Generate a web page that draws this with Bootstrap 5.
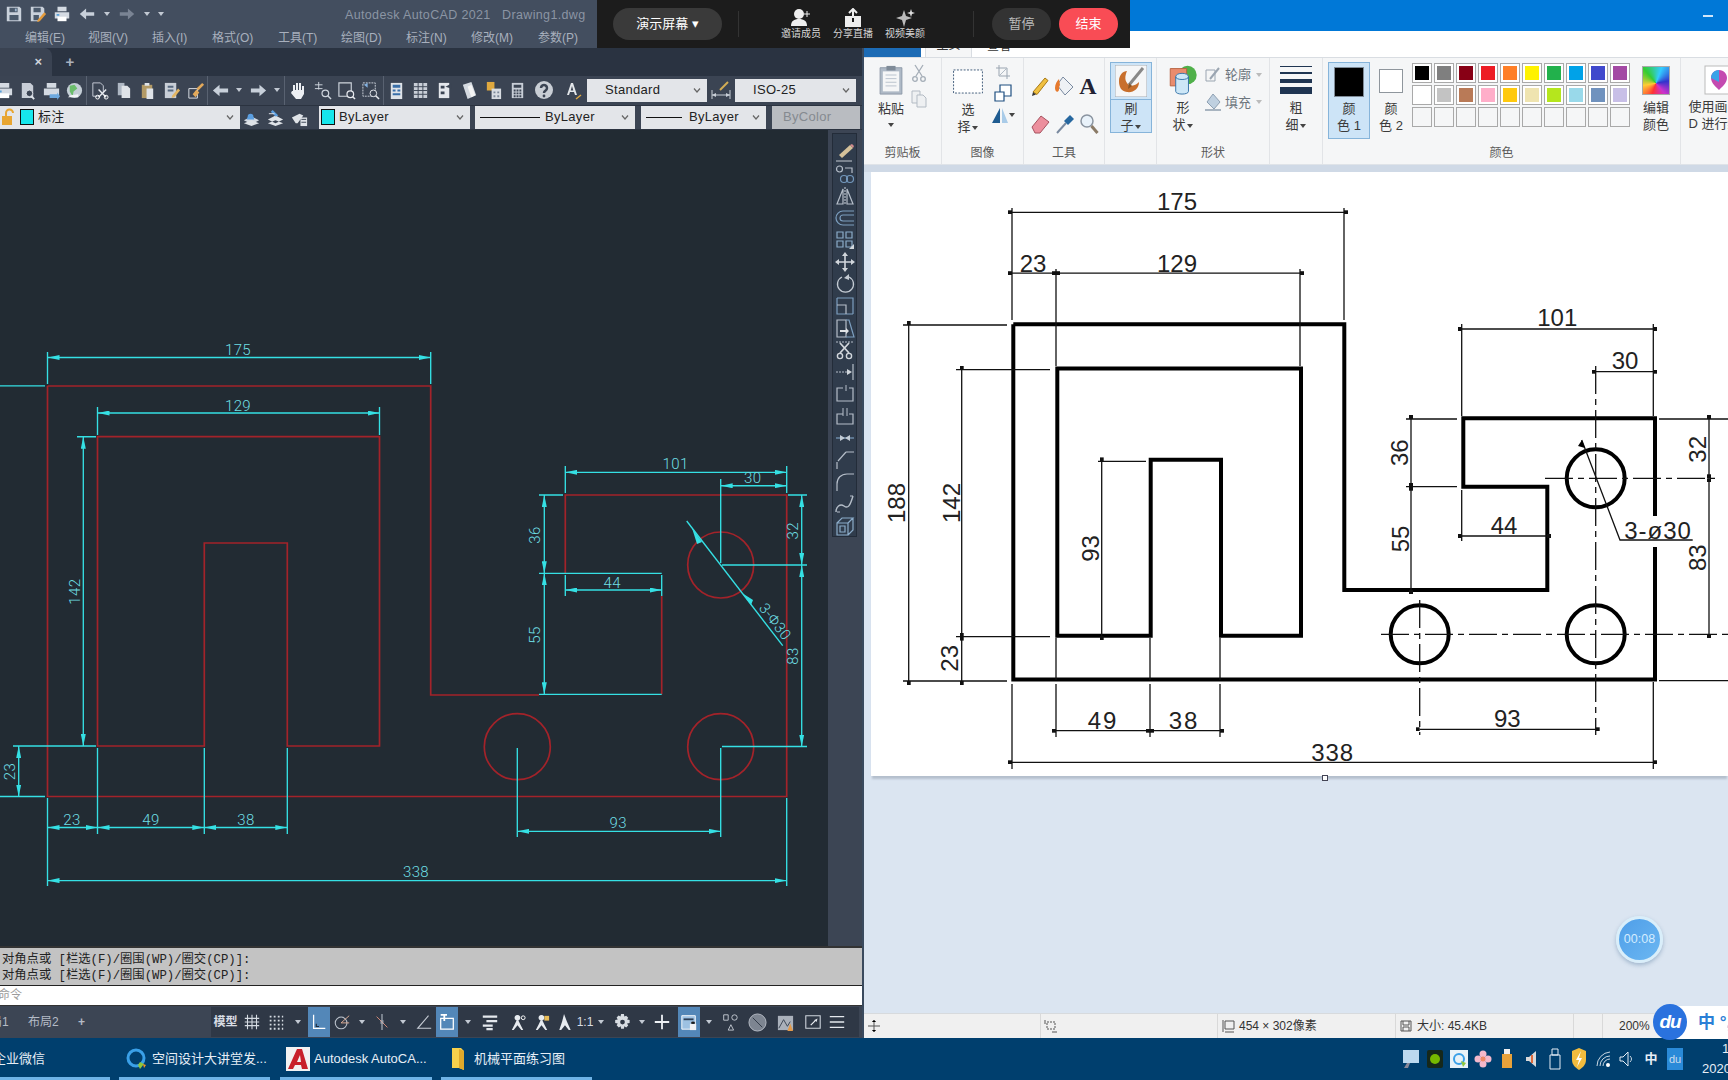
<!doctype html>
<html lang="zh">
<head>
<meta charset="utf-8">
<title>AutoCAD 与 画图</title>
<link href="https://cdn.jsdelivr.net/npm/bootstrap@5.3.0/dist/css/bootstrap.min.css" rel="stylesheet">
<style>
html,body{height:1080px;overflow:hidden;background:#1d2938}
body{font-family:"Liberation Sans","Noto Sans CJK SC",sans-serif;font-size:12px;color:#333;position:relative}
.defs-svg{position:absolute;width:0;height:0}
.desk{height:1038px}
.cad{width:862px;background:#3c4554;color:#aab2bf}
.ptw{width:866px;background:#dbe5f1;border-left:2px solid #3a4a5e}
.cad-title{height:48px;background:#434e5f}
.qat{height:28px;padding-left:5px;gap:6px}
.cad-name{color:#8b95a4;font-size:12.5px;letter-spacing:.35px;left:345px;top:6px}
.cad-menu{padding-left:25px;height:20px;font-size:12px;color:#a8b0bd}
.m1{width:63px}.m2{width:64px}.m3{width:60px}.m4{width:66px}.m5{width:63px}.m6{width:65px}.m7{width:67px}
.cad-tabs{height:28px;background:#2a3341}
.cad-tab{width:52px;background:#3a4352;border-top-right-radius:8px;color:#d0d5dc;font-size:13px;font-weight:700;padding-right:10px}
.tab-plus{width:36px;color:#a9b1bd;font-size:15px;font-weight:700}
.tb1{height:30px;background:#3b4453;border-bottom:1px solid #2b3340}
.tb2{height:24px;background:#3b4453;border-bottom:1px solid #2b3340}
.grp{flex:none;height:100%}
.sep-r{border-right:1px solid #596271}
.g0{margin-left:-7px;width:94px}.g1{width:121px}.g2{width:77px}.g3{width:99px}.g4{width:146px}.g5{width:28px}.g6{width:29px}
.g7{width:28px}.g8{width:71px}.g9{width:8px}
.cmb{flex:none;height:23px;background:#e3e5e9;color:#222;font-size:13px;letter-spacing:.3px;padding-right:5px}
.cmb svg.chev{margin-left:auto}
.cb1{width:120px;padding-left:18px}.cb2{width:121px;padding-left:18px}
.cb3{width:240px;padding-left:2px}.cb4{width:151px;padding-left:2px}.cb5{width:160px;padding-left:5px;margin-left:5px}.cb6{width:125px;padding-left:5px;margin-left:6px}.cb7{width:88px;padding-left:11px;margin-left:6px;background:#b9bcc1;color:#858a90}
.swc{width:14px;height:16px;background:#16e6ec;border:1px solid #111;flex:none}
.swl{margin-right:4px}
.ll1{width:60px;border-top:1px solid #111;margin-right:5px}
.ll2{width:36px;border-top:1px solid #111;margin-right:7px}
.cad-main{height:816px}
.cad-svg{width:828px;height:816px;display:block;background:#222b33;flex:none}
.strip{width:34px;background:#3c4554}
.modbar{width:25px;height:404px;margin:3px 0 0 4px;background:#303c4c;border:1px solid #232c39;padding:8px 0 0}
.modbar svg{opacity:.85}
.cad-cmd{height:40px;background:#c3c3c3;border-top:2px solid #333;padding:4px 0 0 2px;font-family:"Liberation Mono","Noto Sans CJK SC",monospace;font-size:12.3px;line-height:16px;color:#222}
.cad-input{height:21px;background:#fff;border-top:1px solid #222;border-bottom:1px solid #333;color:#9b9b9b;font-size:12px;line-height:19px;margin-left:-2px}
.cad-status{height:32px;background:#3c4554;color:#c3c9d2}
.lay{width:211px;font-size:12px;color:#b4bbc6}
.lay-a{width:30px;margin-left:-10px}.lay-b{width:50px;margin-left:8px}
.st{flex:1;background:#2f3846;height:30px;margin-right:3px;font-size:12px;color:#d8dde4}
.st>*{flex:none;height:100%;display:flex;align-items:center;justify-content:center}
.w11{width:11px}.w16{width:16px}.w18{width:18px}.w20{width:20px}.w22{width:22px}.w24{width:24px}.w29{width:29px}
.act{background:#5387b8}
.mlx{margin-left:3px}
/* paint */
.pt-title{height:31px;background:#0078d7;color:#dfefff}
.pt-min{width:10px;border-top:2px solid #cfe6fa;margin:0 15px 0 auto}
.pt-tabs{height:27px;background:#fff;border-bottom:1px solid #d9dde2}
.pt-file{width:57px;height:22px;background:#1c6bb5}
.pt-home{width:47px;height:26px;margin-left:4px;border:1px solid #d9dde2;border-bottom:0;background:#f5f6f7;color:#333;font-size:12px}
.pt-view{width:50px;height:22px;color:#333;margin-left:2px;font-size:12px}
.ribbon{height:107px;background:#f5f6f7;border-bottom:1px solid #dfe3e8}
.rg{flex:none;border-right:1px solid #e2e4e7;height:100%;color:#3b3b3b;font-size:13px}
.rl{height:20px;line-height:20px;text-align:center;color:#5a5a5a;margin-top:auto;margin-bottom:1px;font-size:12px}
.r1{width:78px}.r2{width:82px}.r3{width:81px}.r4{width:52px}.r5{width:113px}.r6{width:53px}.r7{width:358px}.r8{width:60px}
.rtxt{line-height:17px;text-align:center}
.rtop-ic{display:block;margin-left:auto;margin-right:auto}
.paste-box{margin:7px 0 0 14px;flex:none}
.paste-box .rtop-ic{margin-bottom:5px}
.paste-caret{display:block;margin:4px auto 0}
.clip-side{margin:6px 0 0 7px}
.sel-box{margin:11px 0 0 10px;flex:none}
.sel-box .rtop-ic{margin-bottom:7px}
.img-side{margin:6px 0 0 7px}
.tools-grid{padding:17px 4px 0}
.rbtn{width:42px;background:#cde4f7;border:1px solid #86b4da;flex:none}
.rbtn-b{height:71px;margin:4px 0 0 5px}
.rbtn-b .rtxt:first-of-type{padding-top:1px}
.rbtn-c{height:77px;margin:4px 0 0 5px}
.rtop{height:37px;border-bottom:1px solid #86b4da}
.shape-box{margin:6px 0 0 8px;flex:none;width:36px}
.shape-box .rtop-ic{margin-bottom:4px}
.shape-side{margin:7px 0 0 4px}
.size-ic{margin:8px 0 5px}
.col-blk{width:30px;height:30px;margin:4px auto 3px;background:#000;border:1px solid #7f8b97}
.col-wht{width:24px;height:24px;margin:11px auto 7px;background:#fff;border:1px solid #8f969d}
.col2{margin-left:9px;flex:none}
.pal{gap:2px;width:218px;margin:5px 0 0 9px;align-content:flex-start}
.sw{width:20px;height:20px;border:1px solid #a9a9a9;padding:2px;background:#fff}
.sw i{display:block;width:100%;height:100%}
.sw-e{background:#f5f6f7}
.k0{background:#000}.k1{background:#7f7f7f}.k2{background:#880015}.k3{background:#ed1c24}.k4{background:#ff7f27}.k5{background:#fff200}.k6{background:#22b14c}.k7{background:#00a2e8}.k8{background:#3f48cc}.k9{background:#a349a4}
.l0{background:#fff}.l1{background:#c3c3c3}.l2{background:#b97a57}.l3{background:#ffaec9}.l4{background:#ffc90e}.l5{background:#efe4b0}.l6{background:#b5e61d}.l7{background:#99d9ea}.l8{background:#7092be}.l9{background:#c8bfe7}
.edit-box{margin-left:12px;flex:none}
.rain{width:28px;height:29px;margin:8px auto 4px;border:1px solid #a9a9a9;background:conic-gradient(from 200deg at 50% 60%,#f33,#fc3,#3c3,#3cf,#33c,#c3c,#f33)}
.p3d{padding-left:7px;white-space:nowrap}
.p3d-ic{display:block;margin:7px 0 3px 16px}
.workspace{height:848px;border-top:7px solid #cfd9e6;padding:0 0 0 7px;overflow:hidden}
.pic{width:857px;height:604px;display:block;background:#fff;box-shadow:0 4px 2px -1px #b4bfcd}
.handle{position:absolute;left:1322px;top:775px;width:6px;height:6px;background:#fff;border:1px solid #445}
.pt-status{height:25px;background:#f0f0f0;border-top:1px solid #d7dadd;font-size:12px;color:#333}
.pc{height:100%;border-right:1px solid #d9d9d9;flex:none;padding-left:3px}
.p1{width:177px}.p2{width:177px}.p3{width:178px}.p4{width:178px}.p5{width:29px}.p6{width:120px;padding-left:16px;border:0}
/* taskbar */
.taskbar{height:42px;background:#003f6e;color:#e6eef6;font-size:13px}
.ti{flex:none;height:42px;border-bottom:3px solid #6fb3e6;padding-top:3px}
.t0{width:110px;margin-right:9px}.t0 span{margin-left:-7px}
.t1{width:151px;margin-right:10px;padding-left:5px}
.t2{width:152px;margin-right:9px;padding-left:6px}
.t3{width:151px;padding-left:9px}
.tray{margin-left:auto;margin-right:-18px;width:317px;flex:none}
.tray>span{width:24px;display:flex;justify-content:center;flex:none}
.clock{width:26px;line-height:20px;font-size:13px;white-space:nowrap;flex:none;margin-left:4px}
.clock b{font-weight:400;display:block;padding-left:20px;overflow:hidden}
/* overlays */
.zbar{position:absolute;left:597px;top:0;width:533px;height:48px;background:#1c1c1c;color:#fff;z-index:5}
.zpill{height:32px;border-radius:16px;background:#3a3a3a;font-size:13px}
.zp1{width:109px;margin-left:16px}
.zdiv{width:1px;height:26px;background:#333}
.zdv1{margin:0 36px 0 16px}
.zact{width:52px;color:#d6d6d6;font-size:10px;line-height:12px;text-align:center}
.zp2{width:59px;color:#bbb;background:#333}.zp3{width:59px;margin-left:8px;background:#f94c55;color:#fff}
.zdv2{margin:0 18px 0 42px}
.timer{position:absolute;left:1616px;top:916px;width:47px;height:47px;border-radius:50%;background:linear-gradient(135deg,#4f9ee8,#6bb7f2);border:3px solid #d9eefa;color:#d4ecff;font-size:12.5px;z-index:4;box-shadow:0 2px 4px rgba(70,110,150,.4)}
.ime{position:absolute;left:1672px;top:1006px;width:60px;height:33px;background:#fff;z-index:4;color:#2b7fd6;font-size:17px;font-weight:700;padding-left:26px;white-space:nowrap}
.dubtn{position:absolute;left:1653px;top:1004px;width:34px;height:36px;border-radius:50%;background:#2a72de;color:#fff;font-size:19px;font-weight:700;font-style:italic;z-index:6;letter-spacing:-1px}
/* svg drawing */
.rd{fill:none;stroke:#a3232a;stroke-width:1.7}
.cy{fill:none;stroke:#35e0e4;stroke-width:1.35}
.dm{marker-start:url(#arw);marker-end:url(#arw)}
.ct{fill:#6fdfe4;font:300 15px Roboto,"Liberation Sans",sans-serif;text-anchor:middle;dominant-baseline:central;letter-spacing:.4px}
.th{fill:none;stroke:#000;stroke-width:4}
.tn{fill:none;stroke:#111;stroke-width:1.3}
.tnd{marker-start:url(#tick);marker-end:url(#tick)}
.dash{fill:none;stroke:#111;stroke-width:1.3;stroke-dasharray:28 5 6 5}
.bt{fill:#222;font:400 24px "Liberation Sans",sans-serif;text-anchor:middle;dominant-baseline:central}
</style>
</head>
<body>
<svg class="defs-svg" aria-hidden="true">
<defs>
<symbol id="save" viewBox="0 0 20 20"><path fill="#c9d1db" d="M2 2h14l2 2v14H2z"/><path fill="#4b5a6c" d="M5 3h9v5H5zM5 11h10v6H5z"/><path fill="#9fb6cf" d="M11 4h2v3h-2z"/></symbol>
<symbol id="saveas" viewBox="0 0 20 20"><path fill="#c9d1db" d="M2 2h13l2 2v6l-6 8H2z"/><path fill="#4b5a6c" d="M5 3h8v5H5zM5 11h6v6H5z"/><path fill="#e39a3b" d="M17 8l2 2-7 8-3 1 1-3z"/></symbol>
<symbol id="print" viewBox="0 0 20 20"><path fill="#d4dae2" d="M5 2h10v5H5zM2 8h16v7H2z"/><path fill="#fff" d="M5 13h10v5H5z"/><path fill="#5aa0d8" d="M4 10h3v2H4z"/></symbol>
<symbol id="preview" viewBox="0 0 20 20"><path fill="#c8ced7" d="M4 2h9l3 3v13H4z"/><circle cx="12" cy="13" r="3.5" fill="#3b4453" stroke="#dfe4ea"/><path stroke="#dfe4ea" stroke-width="2" d="M14 16l3 3"/></symbol>
<symbol id="plot" viewBox="0 0 20 20"><path fill="#d4dae2" d="M5 2h10v5H5zM2 8h16v7H2z"/><path fill="#6ea9de" d="M8 14h8v-2l3 4-3 4v-2H8z"/></symbol>
<symbol id="globe" viewBox="0 0 20 20"><circle cx="10" cy="10" r="8" fill="#c4ced6"/><path fill="#6bbd6b" d="M5 5l5-1 3 4-4 3-1 5-3-5z"/><path fill="#f3f5f7" d="M3 17h11v-3l-8 1z"/></symbol>
<symbol id="cut" viewBox="0 0 20 20"><path fill="none" stroke="#c7ced8" d="M3 2h8l3 3v7M3 2v14h5"/><path fill="none" stroke="#e7eaef" stroke-width="1.5" d="M9 9l8 8M17 9l-8 8"/><circle cx="8" cy="17" r="2" fill="none" stroke="#fff"/><circle cx="17" cy="17" r="2" fill="none" stroke="#fff"/></symbol>
<symbol id="copy" viewBox="0 0 20 20"><path fill="#aeb7c3" d="M4 2h7v13H4z"/><path fill="#dfe3e8" d="M8 5h6l3 3v10H8z"/></symbol>
<symbol id="paste" viewBox="0 0 20 20"><path fill="#b39a66" d="M4 4h11v14H4z"/><path fill="#dfe3e8" d="M7 2h5v3H7zM9 8h7v11H9z"/></symbol>
<symbol id="block" viewBox="0 0 20 20"><path fill="#c8ced7" d="M3 2h12v16H3z"/><path fill="#56687f" d="M6 5h6v2H6zM6 9h6v2H6z"/><path fill="#e2b563" d="M19 10l-6 7-3 1 1-3 6-7z"/></symbol>
<symbol id="match" viewBox="0 0 20 20"><path fill="none" stroke="#dde2e8" d="M3 8h9v10H3z"/><path fill="#e2a95b" d="M17 2l2 2-6 6-2-2z"/><path fill="#e2a95b" d="M11 9l3 3-4 5-3-3z"/></symbol>
<symbol id="undo" viewBox="0 0 20 20"><path fill="#c8d0da" d="M2 10l7-6v4h9v4H9v4z"/></symbol>
<symbol id="redo" viewBox="0 0 20 20"><path fill="#c8d0da" d="M18 10l-7-6v4H2v4h9v4z"/></symbol>
<symbol id="redodim" viewBox="0 0 20 20"><path fill="#7a8494" d="M18 10l-7-6v4H2v4h9v4z"/></symbol>
<symbol id="caret" viewBox="0 0 8 8"><path fill="#c2c9d3" d="M1 2h6L4 6z"/></symbol>
<symbol id="hand" viewBox="0 0 20 20"><path fill="#eceff3" d="M5 11V5h2v5h1V3h2v7h1V3h2v7h1V6h2v8l-3 5H8L3 13l1-2z"/></symbol>
<symbol id="zoomrt" viewBox="0 0 20 20"><path stroke="#cfd5dd" fill="none" d="M6 1v8M2 4h8M2 8h8"/><circle cx="13" cy="13" r="3.5" fill="none" stroke="#cfd5dd" stroke-width="1.3"/><path stroke="#cfd5dd" stroke-width="1.5" d="M15.5 15.5L19 19"/></symbol>
<symbol id="zoomwin" viewBox="0 0 20 20"><path fill="none" stroke="#cfd5dd" stroke-width="1.2" d="M2 2h13v14H2z"/><circle cx="14" cy="14" r="3.5" fill="#3b4453" stroke="#e7eaef" stroke-width="1.3"/><path stroke="#e7eaef" stroke-width="1.6" d="M16.5 16.5L19 19"/></symbol>
<symbol id="zoomprev" viewBox="0 0 20 20"><path fill="none" stroke="#cfd5dd" stroke-dasharray="2 1" d="M2 2h13v14H2z"/><path fill="#83b1e0" d="M3 4l4-2v5z"/><circle cx="13" cy="13" r="3.5" fill="#3b4453" stroke="#e7eaef"/><path stroke="#e7eaef" stroke-width="1.6" d="M15.5 15.5L19 19"/></symbol>
<symbol id="props" viewBox="0 0 20 20"><path fill="#dfe3e8" d="M4 2h12v17H4z"/><path fill="#3a6fa8" d="M6 4h8v3H6zM6 9h3v2H6zM11 9h3v2h-3zM6 13h8v2H6z"/></symbol>
<symbol id="design" viewBox="0 0 20 20"><path fill="#c8ced7" d="M3 2h4v16H3zM8 2h4v16H8zM13 2h4v16h-4z"/><path stroke="#3b4453" d="M3 6h14M3 10h14M3 14h14"/></symbol>
<symbol id="tool" viewBox="0 0 20 20"><path fill="#e4e7ec" d="M4 2h11v16H4z"/><path fill="#3b4453" d="M6 5h4v3H6zM6 11h4v3H6z"/><path fill="#3b4453" d="M11 6l6-3v5z"/></symbol>
<symbol id="sheet" viewBox="0 0 20 20"><path fill="#d4d9e0" d="M3 4l9-3 5 14-9 4z"/><path fill="#f4f4f4" d="M8 6l4-2 4 11-4 2z"/></symbol>
<symbol id="markup" viewBox="0 0 20 20"><path fill="#e0a93f" d="M3 1h8v9H3z"/><path fill="#d8dce2" d="M8 8h10v11H8z"/><path fill="#7b8798" d="M10 11h2v2h-2zM14 11h2v2h-2zM10 15h2v2h-2zM14 15h2v2h-2z"/></symbol>
<symbol id="calc" viewBox="0 0 20 20"><path fill="#c8ced7" d="M4 2h12v16H4z"/><path fill="#3b4453" d="M6 4h8v3H6zM6 9h2v2H6zM9 9h2v2H9zM12 9h2v2h-2zM6 12h2v2H6zM9 12h2v2H9zM12 12h2v2h-2zM6 15h2v2H6zM9 15h2v2H9zM12 15h2v2h-2z"/></symbol>
<symbol id="help" viewBox="0 0 20 20"><circle cx="10" cy="10" r="9" fill="#c9ced5"/><path fill="none" stroke="#3b4453" stroke-width="2.5" d="M7 8a3 3 0 1 1 4.5 2.6c-1 .6-1.5 1-1.5 2.4"/><circle cx="10" cy="16" r="1.4" fill="#3b4453"/></symbol>
<symbol id="astyle" viewBox="0 0 20 20"><path fill="#e3e6ea" d="M8 3h2l4 12h-2l-1-3H7l-1 3H4zM7.7 10.5h2.6L9 6z"/><path stroke="#e0a93f" stroke-width="1.5" d="M13 19l5-4"/></symbol>
<symbol id="dimst" viewBox="0 0 22 20"><path stroke="#c8ced7" fill="none" d="M2 10v9M20 10v9M2 15h18"/><path fill="#c8ced7" d="M2 15l4-2v4zM20 15l-4-2v4z"/><path stroke="#d2ad54" stroke-width="2" d="M10 10l8-8"/></symbol>
<symbol id="chev" viewBox="0 0 10 10"><path fill="none" stroke="#666" stroke-width="1.2" d="M2 3.5L5 7l3-3.5"/></symbol>
<symbol id="lock" viewBox="0 0 14 18"><path fill="none" stroke="#e8a531" stroke-width="2" d="M4 9V5a3.5 3.5 0 0 1 7 0"/><path fill="#e8a531" d="M0 8h10v9H0z"/></symbol>
<symbol id="lyr1" viewBox="0 0 20 20"><path fill="#d5dbe3" d="M2 13l8-4 8 4-8 4z"/><path fill="#dfe3e8" d="M2 16l8 3 8-3-8-3z"/><path fill="#5b9ee0" d="M6 9a3 3 0 1 1 6 0l1 3H5z"/></symbol>
<symbol id="lyr2" viewBox="0 0 20 20"><path fill="#dfe3e8" d="M2 12l8-4 8 4-8 4zM2 16l8 3 8-3-8-3z"/><path fill="#5b9ee0" d="M7 2l6 6-3 1-5-5z"/><path stroke="#dfe3e8" d="M3 6h6"/></symbol>
<symbol id="lyr3" viewBox="0 0 20 20"><path fill="#dfe3e8" d="M2 10l8-4 4 2-6 8H6zM2 14l4 2"/><path fill="#dfe3e8" d="M11 10h7v9h-7z"/><path stroke="#3b4453" d="M12 12h5M12 15h5"/></symbol>
<!-- side modify -->
<symbol id="s1" viewBox="0 0 20 20"><path fill="#f1d9a8" d="M4 13L15 3l3 3L7 16z"/><path fill="#e99" d="M15 3l3 3 1-2-2-2z"/><path stroke="#dfe4ea" d="M1 19h16"/></symbol>
<symbol id="s2" viewBox="0 0 20 20" ><g fill="none" stroke="#cdd5df" stroke-width="1.2"><circle cx="4.5" cy="5" r="3"/><path d="M10 4h7v5"/><circle cx="9" cy="15" r="3.5" stroke="#7fa8d0"/><circle cx="15" cy="15" r="3.5" stroke="#7fa8d0"/></g></symbol>
<symbol id="s3" viewBox="0 0 20 20"><g fill="none" stroke="#cdd5df" stroke-width="1.2"><path d="M8 3v15H2zM12 3v15h6z"/><path stroke-dasharray="2 1" d="M10 1v18"/></g></symbol>
<symbol id="s4" viewBox="0 0 20 20"><g fill="none" stroke="#8ab0d4" stroke-width="1.2"><path d="M19 3H8a6.5 6.5 0 0 0 0 14h11"/><path d="M19 7H8a2.5 2.5 0 0 0 0 6h11"/></g></symbol>
<symbol id="s5" viewBox="0 0 20 20"><g fill="none" stroke="#9cc0e0" stroke-width="1.2"><path d="M2 2h6v6H2zM11 2h6v6h-6zM2 11h6v6H2zM11 11h6v6h-6z"/></g><path fill="#eef1f5" d="M19 14v5h-5z"/></symbol>
<symbol id="s6" viewBox="0 0 20 20"><path stroke="#eef1f5" stroke-width="1.6" d="M10 3v14M3 10h14"/><path fill="#eef1f5" d="M10 0l3 4H7zM10 20l-3-4h6zM0 10l4-3v6zM20 10l-4 3V7z"/></symbol>
<symbol id="s7" viewBox="0 0 20 20"><path fill="none" stroke="#dde3ea" stroke-width="1.3" d="M14 3a8 8 0 1 1-7 0"/><path fill="#dde3ea" d="M14 0v6l-5-2z"/></symbol>
<symbol id="s8" viewBox="0 0 20 20"><g fill="none" stroke="#cdd5df" stroke-width="1.2"><path d="M2 2h16v16M2 2v16h16" stroke="#8ab0d4"/><path d="M2 9h9v9"/></g></symbol>
<symbol id="s9" viewBox="0 0 20 20"><g fill="none" stroke="#cdd5df" stroke-width="1.2"><path d="M2 2h9v17H2z"/><path stroke="#8ab0d4" d="M11 2h3l5 17h-8"/></g><path fill="#fff" d="M5 12h6v-2l3 3-3 3v-2H5z"/></symbol>
<symbol id="s10" viewBox="0 0 20 20"><path stroke="#cdd5df" stroke-dasharray="2 1" d="M1 2h18"/><path stroke="#eef1f5" stroke-width="1.8" d="M5 3l9 10M14 3L5 13"/><circle cx="5" cy="16" r="2.6" fill="none" stroke="#eef1f5" stroke-width="1.4"/><circle cx="14" cy="16" r="2.6" fill="none" stroke="#eef1f5" stroke-width="1.4"/></symbol>
<symbol id="s11" viewBox="0 0 20 20"><path stroke="#cdd5df" stroke-width="1.2" d="M18 2v16"/><path stroke="#cdd5df" stroke-dasharray="2 1" d="M1 10h14"/><path fill="#eef1f5" d="M17 10l-5-3v6z"/></symbol>
<symbol id="s12" viewBox="0 0 20 20"><path fill="none" stroke="#cdd5df" stroke-width="1.2" d="M8 4H2v13h16V4h-4"/><path stroke="#cdd5df" d="M11 1v6"/></symbol>
<symbol id="s13" viewBox="0 0 20 20"><path fill="none" stroke="#cdd5df" stroke-width="1.2" d="M8 8H2v10h16V8h-4"/><path stroke="#cdd5df" d="M8 2v8M12 2v8"/></symbol>
<symbol id="s14" viewBox="0 0 20 20"><path stroke="#8ab0d4" stroke-width="1.2" d="M1 10h18"/><path fill="#dce4ec" d="M10 10L5 7v6zM10 10l5-3v6z"/></symbol>
<symbol id="s15" viewBox="0 0 20 20"><path fill="none" stroke="#cdd5df" stroke-width="1.2" d="M11 2h8M2 12v7"/><path stroke="#cdd5df" stroke-width="1.2" d="M3 11l8-9"/></symbol>
<symbol id="s16" viewBox="0 0 20 20"><path fill="none" stroke="#cdd5df" stroke-width="1.2" d="M12 2h7M2 12v7M2 12c0-6 4-10 10-10"/></symbol>
<symbol id="s17" viewBox="0 0 20 20"><path fill="none" stroke="#cdd5df" stroke-width="1.4" d="M1 18c0-5 4-9 8-6s6 0 9-10"/><path stroke="#cdd5df" d="M2 18h3M15 2h3"/></symbol>
<symbol id="s18" viewBox="0 0 20 20"><g fill="none" stroke="#9cc0e0" stroke-width="1.2"><path d="M2 7h11v12H2zM2 7l5-5h11l-5 5M18 2v12l-5 5M5 10h5v6H5z"/></g></symbol>
<!-- status -->
<symbol id="q1" viewBox="0 0 20 20"><path stroke="#d5dbe2" stroke-width="1.2" d="M5 2v16M10 2v16M15 2v16M2 6h16M2 10h16M2 14h16"/></symbol>
<symbol id="q2" viewBox="0 0 20 20"><path stroke="#d5dbe2" stroke-width="2" stroke-dasharray="2 2.5" d="M3 4h15M3 8.500h15M3 13h15M3 17.500h15"/></symbol>
<symbol id="q3" viewBox="0 0 20 20"><path fill="none" stroke="#fff" stroke-width="1.4" d="M4 2v15h13"/><path fill="none" stroke="#1d2a3a" stroke-width="1.2" d="M7 12v3h3"/></symbol>
<symbol id="q4" viewBox="0 0 20 20"><circle cx="9" cy="11" r="6.5" fill="none" stroke="#b9c0ca" stroke-width="1.2"/><path stroke="#e8b39a" d="M9 11l9-8M9 11h9"/></symbol>
<symbol id="q5" viewBox="0 0 20 20"><path stroke="#b9c0ca" stroke-width="1.2" d="M10 1v18"/><path stroke="#e0907a" d="M4 4l12 12"/><path fill="#b9c0ca" d="M8 8h4v4H8z" opacity=".5"/></symbol>
<symbol id="q6" viewBox="0 0 20 20"><path fill="none" stroke="#c6ccd5" stroke-width="1.2" d="M15 3L3 17h15"/></symbol>
<symbol id="q7" viewBox="0 0 20 20"><path fill="none" stroke="#fff" stroke-width="1.4" d="M3 6h14v12H3z"/><path stroke="#fff" stroke-width="2" d="M7 2v7M3 2h7"/></symbol>
<symbol id="q8" viewBox="0 0 20 20"><path stroke="#e4e8ed" stroke-width="2.5" d="M2 4h16M6 9h12M2 14h11M6 18h7"/></symbol>
<symbol id="q9" viewBox="0 0 20 20"><path fill="#e7ebf0" d="M10 8a3 3 0 1 0-.1 0zM9 8h2l2 4 3 6h-2l-4-5-4 5H4l3-6z"/><circle cx="16" cy="5" r="2" fill="none" stroke="#fff"/></symbol>
<symbol id="q10" viewBox="0 0 20 20"><path fill="#e7ebf0" d="M10 8a3 3 0 1 0-.1 0zM9 8h2l2 4 3 6h-2l-4-5-4 5H4l3-6z"/><path fill="#e9bd58" d="M13 3h5v5h-5z"/></symbol>
<symbol id="q11" viewBox="0 0 20 20"><path fill="#e7ebf0" d="M9.500 1l3 8 4 9h-2l-4-5-4 5h-2l3-9z"/></symbol>
<symbol id="q12" viewBox="0 0 20 20"><path fill="#d8dde3" d="M8.500 1h3l.4 2.600 2-.8 2.100 2.100-1.200 2 2.700.6v3l-2.700.6 1.200 2-2.100 2.100-2-1.200-.4 2.600h-3l-.4-2.600-2 1.200L3.800 13l1.200-2-2.700-.6v-3L5 6.800l-1.200-2 2.100-2.100 2 .9zM10 7a2.500 2.500 0 1 0 0 5 2.500 2.500 0 0 0 0-5z"/></symbol>
<symbol id="q13" viewBox="0 0 20 20"><path stroke="#eef1f5" stroke-width="2" d="M10 2v16M2 10h16"/></symbol>
<symbol id="q14" viewBox="0 0 20 20"><path fill="#9dc1e2" stroke="#fff" d="M2 3h15v15H2z"/><path fill="#2c3e55" d="M4 6h11v2H4z"/><path fill="#f1f3f5" d="M11 12h7v7h-7z"/><path stroke="#333" d="M13 12v-2h3v2"/></symbol>
<symbol id="q15" viewBox="0 0 20 20"><g fill="none" stroke="#c8ced6"><path d="M3 2h5v6H3z"/><circle cx="15" cy="5" r="3"/><path d="M8 19l3-6 3 6z"/></g></symbol>
<symbol id="q16" viewBox="0 0 20 20"><circle cx="10" cy="10" r="9" fill="#7d8591" stroke="#b7bdc6"/><path stroke="#2f3846" d="M5 5l10 10"/></symbol>
<symbol id="q17" viewBox="0 0 20 20"><path fill="#aab1bb" d="M2 3h16v15H2z"/><path stroke="#3a4453" fill="none" d="M3 16l5-9 4 7 3-5"/><path fill="#e29a4b" d="M12 19l3-8 3 8z"/></symbol>
<symbol id="q18" viewBox="0 0 20 20"><path fill="none" stroke="#cfd5dd" stroke-width="1.2" d="M2 3h16v14H2z"/><path fill="#e9edf2" d="M7 13l5-5-1 0 4-2-1 4-1-1-5 5z"/></symbol>
<symbol id="q19" viewBox="0 0 20 20"><path stroke="#e4e8ed" stroke-width="1.6" d="M2 4h16M2 10h16M2 16h16"/></symbol>
</defs>
</svg>

<div class="desk d-flex">
  <!-- AutoCAD -->
  <section class="cad d-flex flex-column flex-none">
    <div class="cad-title position-relative">
      <div class="qat d-flex align-items-center">
        <svg width="18" height="18"><use href="#save"/></svg>
        <svg width="18" height="18"><use href="#saveas"/></svg>
        <svg width="18" height="18"><use href="#print"/></svg>
        <svg width="20" height="18"><use href="#undo"/></svg>
        <svg width="8" height="8"><use href="#caret"/></svg>
        <svg width="20" height="18"><use href="#redodim"/></svg>
        <svg width="8" height="8"><use href="#caret"/></svg>
        <svg width="8" height="10"><use href="#caret"/></svg>
      </div>
      <div class="cad-name position-absolute">Autodesk AutoCAD 2021 &nbsp;&nbsp;Drawing1.dwg</div>
      <div class="cad-menu d-flex align-items-center">
        <span class="m1">编辑(E)</span><span class="m2">视图(V)</span><span class="m3">插入(I)</span><span class="m4">格式(O)</span><span class="m5">工具(T)</span><span class="m6">绘图(D)</span><span class="m6">标注(N)</span><span class="m7">修改(M)</span><span>参数(P)</span>
      </div>
    </div>
    <div class="cad-tabs d-flex">
      <div class="cad-tab d-flex align-items-center justify-content-end">×</div>
      <div class="tab-plus d-flex align-items-center justify-content-center">+</div>
    </div>
    <div class="tb1 d-flex align-items-center">
      <div class="grp g0 sep-r d-flex align-items-center justify-content-around"><svg width="19" height="19"><use href="#print"/></svg><svg width="19" height="19"><use href="#preview"/></svg><svg width="19" height="19"><use href="#plot"/></svg><svg width="19" height="19"><use href="#globe"/></svg></div>
      <div class="grp g1 sep-r d-flex align-items-center justify-content-around"><svg width="19" height="19"><use href="#cut"/></svg><svg width="19" height="19"><use href="#copy"/></svg><svg width="19" height="19"><use href="#paste"/></svg><svg width="19" height="19"><use href="#block"/></svg><svg width="19" height="19"><use href="#match"/></svg></div>
      <div class="grp g2 sep-r d-flex align-items-center justify-content-around"><svg width="19" height="19"><use href="#undo"/></svg><svg width="8" height="8"><use href="#caret"/></svg><svg width="19" height="19"><use href="#redo"/></svg><svg width="8" height="8"><use href="#caret"/></svg></div>
      <div class="grp g3 sep-r d-flex align-items-center justify-content-around"><svg width="20" height="20"><use href="#hand"/></svg><svg width="19" height="19"><use href="#zoomrt"/></svg><svg width="19" height="19"><use href="#zoomwin"/></svg><svg width="19" height="19"><use href="#zoomprev"/></svg></div>
      <div class="grp g4 d-flex align-items-center justify-content-around"><svg width="19" height="19"><use href="#props"/></svg><svg width="19" height="19"><use href="#design"/></svg><svg width="19" height="19"><use href="#tool"/></svg><svg width="19" height="19"><use href="#sheet"/></svg><svg width="19" height="19"><use href="#markup"/></svg><svg width="19" height="19"><use href="#calc"/></svg></div>
      <div class="grp g5 d-flex align-items-center justify-content-center"><svg width="20" height="20"><use href="#help"/></svg></div>
      <div class="grp g6 d-flex align-items-center justify-content-center"><svg width="20" height="20"><use href="#astyle"/></svg></div>
      <div class="cmb cb1 d-flex align-items-center">Standard<svg class="chev" width="10" height="10"><use href="#chev"/></svg></div>
      <div class="grp g7 d-flex align-items-center justify-content-center"><svg width="22" height="20"><use href="#dimst"/></svg></div>
      <div class="cmb cb2 d-flex align-items-center">ISO-25<svg class="chev" width="10" height="10"><use href="#chev"/></svg></div>
    </div>
    <div class="tb2 d-flex align-items-center">
      <div class="cmb cb3 d-flex align-items-center"><svg class="swl" width="14" height="18"><use href="#lock"/></svg><span class="swc swl"></span>标注<svg class="chev" width="10" height="10"><use href="#chev"/></svg></div>
      <div class="grp g8 d-flex align-items-center justify-content-around"><svg width="19" height="19"><use href="#lyr1"/></svg><svg width="19" height="19"><use href="#lyr2"/></svg><svg width="19" height="19"><use href="#lyr3"/></svg></div>
      <div class="g9 flex-none"></div>
      <div class="cmb cb4 d-flex align-items-center"><span class="swc swl"></span>ByLayer<svg class="chev" width="10" height="10"><use href="#chev"/></svg></div>
      <div class="cmb cb5 d-flex align-items-center"><span class="ll1"></span>ByLayer<svg class="chev" width="10" height="10"><use href="#chev"/></svg></div>
      <div class="cmb cb6 d-flex align-items-center"><span class="ll2"></span>ByLayer<svg class="chev" width="10" height="10"><use href="#chev"/></svg></div>
      <div class="cmb cb7 d-flex align-items-center">ByColor</div>
    </div>
    <div class="cad-main d-flex">
      <svg class="cad-svg" viewBox="0 130 828 816">
        <defs>
          <marker id="arw" viewBox="0 0 12 5" refX="12" refY="2.5" markerWidth="12" markerHeight="5" markerUnits="userSpaceOnUse" orient="auto-start-reverse"><path d="M0 0L12 2.500L0 5z" fill="#35e0e4"/></marker>
        </defs>
        <!-- red geometry -->
        <path class="rd" d="M47.500 386H430.700V695H539M47.500 386V796.500H786.700V495H565.300V573.300M661.700 595.700V694.300"/>
        <path class="rd" d="M97.500 746V436.700H379.500V746H287.300V543H204.300V746z"/>
        <circle class="rd" cx="720.700" cy="565" r="33"/>
        <circle class="rd" cx="517.300" cy="746.700" r="33"/>
        <circle class="rd" cx="720.700" cy="746.700" r="33"/>
        <!-- extension lines -->
        <path class="cy" d="M47.500 352V384M430.700 352V384M97.500 407V435M379.500 407V435M0 385.800H45M77 436.700H96M13 746H96M0 796.500H45M47.500 798V886M97.500 748V834M204.300 748V834M287.300 748V834M786.700 466V493M565.300 466V493M720.700 479V563M539 495H563M788 495H807M722 565H807M722 746.500H807M539 573.300H661.700M539 694.300H661.700M565.300 575V596M661.700 575V596M517.300 748V837M720.700 748V837M786.700 798V886"/>
        <!-- dimensions -->
        <line class="cy dm" x1="47.500" y1="357.500" x2="430.700" y2="357.500"/>
        <line class="cy dm" x1="97.500" y1="413" x2="379.500" y2="413"/>
        <line class="cy dm" x1="83.300" y1="436.700" x2="83.300" y2="746"/>
        <line class="cy dm" x1="18.700" y1="746" x2="18.700" y2="796.500"/>
        <line class="cy dm" x1="47.500" y1="827.500" x2="97.500" y2="827.500"/>
        <line class="cy dm" x1="97.500" y1="827.500" x2="204.300" y2="827.500"/>
        <line class="cy dm" x1="204.300" y1="827.500" x2="287.300" y2="827.500"/>
        <line class="cy dm" x1="47.500" y1="880.600" x2="786.700" y2="880.600"/>
        <line class="cy dm" x1="565.300" y1="472.300" x2="786.700" y2="472.300"/>
        <line class="cy dm" x1="720.700" y1="485.700" x2="786.700" y2="485.700"/>
        <line class="cy dm" x1="544.300" y1="495" x2="544.300" y2="573.300"/>
        <line class="cy dm" x1="544.300" y1="573.300" x2="544.300" y2="694.300"/>
        <line class="cy dm" x1="565.300" y1="590" x2="661.700" y2="590"/>
        <line class="cy dm" x1="801.700" y1="495" x2="801.700" y2="565"/>
        <line class="cy dm" x1="801.700" y1="565" x2="801.700" y2="746.500"/>
        <line class="cy dm" x1="517.300" y1="831.300" x2="720.700" y2="831.300"/>
        <line class="cy" x1="686.700" y1="521" x2="782.700" y2="645.700"/>
        <path d="M692 528l10 14-5 2z" fill="#35e0e4"/><path d="M742 593l9 12 2-5z" fill="#35e0e4"/>
        <!-- numbers -->
        <text class="ct" x="238" y="349.500">175</text>
        <text class="ct" x="238" y="405.700">129</text>
        <text class="ct" x="72" y="819.500">23</text>
        <text class="ct" x="151" y="819.500">49</text>
        <text class="ct" x="246" y="819.500">38</text>
        <text class="ct" x="416" y="872">338</text>
        <text class="ct" x="675.700" y="464.300">101</text>
        <text class="ct" x="752.700" y="478">30</text>
        <text class="ct" x="612.300" y="582.700">44</text>
        <text class="ct" x="618.300" y="823.300">93</text>
        <text class="ct" transform="rotate(-90 75 591.700)" x="75" y="591.700">142</text>
        <text class="ct" transform="rotate(-90 10 771.600)" x="10" y="771.600">23</text>
        <text class="ct" transform="rotate(-90 535.300 535)" x="535.300" y="535">36</text>
        <text class="ct" transform="rotate(-90 535.300 635)" x="535.300" y="635">55</text>
        <text class="ct" transform="rotate(-90 792.700 530.700)" x="792.700" y="530.700">32</text>
        <text class="ct" transform="rotate(-90 792.700 656)" x="792.700" y="656">83</text>
        <text class="ct" transform="rotate(52 775 621.700)" x="775" y="621.700">3-Φ30</text>
      </svg>
      <div class="strip flex-none">
        <div class="modbar d-flex flex-column align-items-center justify-content-between">
          <svg width="20" height="20"><use href="#s1"/></svg><svg width="20" height="20"><use href="#s2"/></svg><svg width="20" height="20"><use href="#s3"/></svg><svg width="20" height="20"><use href="#s4"/></svg><svg width="20" height="20"><use href="#s5"/></svg><svg width="20" height="20"><use href="#s6"/></svg><svg width="20" height="20"><use href="#s7"/></svg><svg width="20" height="20"><use href="#s8"/></svg><svg width="20" height="20"><use href="#s9"/></svg><svg width="20" height="20"><use href="#s10"/></svg><svg width="20" height="20"><use href="#s11"/></svg><svg width="20" height="20"><use href="#s12"/></svg><svg width="20" height="20"><use href="#s13"/></svg><svg width="20" height="20"><use href="#s14"/></svg><svg width="20" height="20"><use href="#s15"/></svg><svg width="20" height="20"><use href="#s16"/></svg><svg width="20" height="20"><use href="#s17"/></svg><svg width="20" height="20"><use href="#s18"/></svg>
        </div>
      </div>
    </div>
    <div class="cad-cmd"><div>对角点或 [栏选(F)/圈围(WP)/圈交(CP)]:</div><div>对角点或 [栏选(F)/圈围(WP)/圈交(CP)]:</div></div>
    <div class="cad-input">命令</div>
    <div class="cad-status d-flex align-items-center">
      <div class="lay d-flex align-items-center flex-none"><span class="lay-a">局1</span><span class="lay-b">布局2</span><span class="fw-bold">+</span></div>
      <div class="st d-flex align-items-center">
        <span class="w29 fw-bold">模型</span>
        <span class="w24"><svg width="18" height="18"><use href="#q1"/></svg></span>
        <span class="w24"><svg width="18" height="18"><use href="#q2"/></svg></span>
        <span class="w20"><svg width="8" height="8"><use href="#caret"/></svg></span>
        <span class="w22 act"><svg width="18" height="18"><use href="#q3"/></svg></span>
        <span class="w24"><svg width="18" height="18"><use href="#q4"/></svg></span>
        <span class="w16"><svg width="8" height="8"><use href="#caret"/></svg></span>
        <span class="w24"><svg width="18" height="18"><use href="#q5"/></svg></span>
        <span class="w18"><svg width="8" height="8"><use href="#caret"/></svg></span>
        <span class="w24"><svg width="18" height="18"><use href="#q6"/></svg></span>
        <span class="w22 act"><svg width="18" height="18"><use href="#q7"/></svg></span>
        <span class="w20"><svg width="8" height="8"><use href="#caret"/></svg></span>
        <span class="w24"><svg width="18" height="18"><use href="#q8"/></svg></span>
        <span class="w24 mlx"><svg width="19" height="19"><use href="#q9"/></svg></span>
        <span class="w24"><svg width="19" height="19"><use href="#q10"/></svg></span>
        <span class="w22"><svg width="19" height="19"><use href="#q11"/></svg></span>
        <span class="w20">1:1</span>
        <span class="w11"><svg width="8" height="8"><use href="#caret"/></svg></span>
        <span class="w24 ms-1"><svg width="19" height="19"><use href="#q12"/></svg></span>
        <span class="w16"><svg width="8" height="8"><use href="#caret"/></svg></span>
        <span class="w24"><svg width="18" height="18"><use href="#q13"/></svg></span>
        <span class="w22 act ms-1"><svg width="18" height="18"><use href="#q14"/></svg></span>
        <span class="w18"><svg width="8" height="8"><use href="#caret"/></svg></span>
        <span class="w24"><svg width="18" height="18"><use href="#q15"/></svg></span>
        <span class="w24 mlx"><svg width="19" height="19"><use href="#q16"/></svg></span>
        <span class="w24 ms-1"><svg width="19" height="19"><use href="#q17"/></svg></span>
        <span class="w24 ms-1"><svg width="18" height="18"><use href="#q18"/></svg></span>
        <span class="w24"><svg width="18" height="18"><use href="#q19"/></svg></span>
      </div>
    </div>
  </section>

  <!-- Paint -->
  <section class="ptw d-flex flex-column flex-none">
    <div class="pt-title d-flex align-items-center"><span class="pt-min"></span></div>
    <div class="pt-tabs d-flex align-items-end">
      <div class="pt-file"></div>
      <div class="pt-home d-flex align-items-center justify-content-center">主页</div>
      <div class="pt-view d-flex align-items-center justify-content-center">查看</div>
    </div>
    <div class="ribbon d-flex">
      <!-- clipboard -->
      <div class="rg r1 d-flex flex-column">
        <div class="d-flex">
          <div class="rtxt paste-box">
            <svg class="rtop-ic" width="26" height="30" viewBox="0 0 28 33"><path fill="#aeb9c6" stroke="#8b97a6" d="M2 3h24v29H2z"/><path fill="#f5f6f7" d="M5 7h18v22H5z"/><path fill="#7f8b98" d="M9 1h10v5H9z"/><path stroke="#b5bfca" d="M8 11h12M8 15h12M8 19h12M8 23h12"/></svg>
            <div>粘贴</div>
            <svg class="paste-caret" width="8" height="8"><path fill="#444" d="M1 2h6L4 6z"/></svg>
          </div>
          <div class="clip-side d-flex flex-column align-items-center gap-2">
            <svg width="14" height="18" viewBox="0 0 14 18"><g fill="none" stroke="#a4adb7" stroke-width="1.3"><path d="M3 1l7 11M11 1L4 12"/><circle cx="3" cy="15" r="2.300"/><circle cx="11" cy="15" r="2.300"/></g></svg>
            <svg width="16" height="18" viewBox="0 0 16 18"><g fill="#eef0f2" stroke="#b3bbc4"><path d="M1 1h8v12H1z"/><path d="M6 5h6l3 3v9H6z"/></g></svg>
          </div>
        </div>
        <div class="rl">剪贴板</div>
      </div>
      <!-- image -->
      <div class="rg r2 d-flex flex-column">
        <div class="d-flex">
          <div class="rtxt sel-box">
            <svg class="rtop-ic" width="32" height="25" viewBox="0 0 32 26"><path fill="#fff" stroke="#3f5b7a" stroke-dasharray="2 1.500" d="M1 1h30v24H1z"/></svg>
            <div>选</div><div>择<svg width="8" height="8"><path fill="#444" d="M1 2h6L4 6z"/></svg></div>
          </div>
          <div class="img-side d-flex flex-column align-items-center gap-1">
            <svg width="16" height="16" viewBox="0 0 16 16"><path fill="none" stroke="#9aa5b1" d="M4 1v11h11M1 4h11v11"/><path stroke="#b0bac4" d="M4 12l8-8"/></svg>
            <svg width="18" height="18" viewBox="0 0 18 18"><path fill="#fff" stroke="#1f4f80" stroke-width="1.200" d="M6 1h11v11H6z"/><path fill="#fff" stroke="#1f4f80" stroke-width="1.200" d="M1 8h9v9H1z"/></svg>
            <svg width="24" height="18" viewBox="0 0 24 18"><path fill="#1f5c91" d="M9 2v15H1z"/><path fill="#a9cbe8" d="M11 2v15h6z"/><path fill="#444" d="M18 7h6l-3 4z"/></svg>
          </div>
        </div>
        <div class="rl">图像</div>
      </div>
      <!-- tools -->
      <div class="rg r3 d-flex flex-column">
        <div class="tools-grid d-flex flex-wrap justify-content-around row-gap-3">
          <svg width="20" height="22" viewBox="0 0 20 22"><path fill="#f0c040" stroke="#a87a17" d="M3 17L15 3l3 2.500-11 14z"/><path fill="#333" d="M3 17l-1 4 4-1.500z"/></svg>
          <svg width="22" height="22" viewBox="0 0 22 22"><path fill="#eef1f5" stroke="#7a8aa0" d="M10 2l10 10-8 8L4 10z"/><path fill="#e67a2e" d="M2 13c0-4 2-7 4-9l1 6c-1 2-1 3-1 5-1 3-4 2-4-2z"/></svg>
          <svg width="20" height="22" viewBox="0 0 20 22"><text x="10" y="19" text-anchor="middle" font-family="Liberation Serif" font-size="24" font-weight="700" fill="#223">A</text></svg>
          <svg width="22" height="22" viewBox="0 0 22 22"><path fill="#ec8f9d" stroke="#a6525f" d="M3 14l9-11 8 6-9 11H6z"/></svg>
          <svg width="22" height="22" viewBox="0 0 22 22"><path stroke="#7a8aa0" stroke-width="2" d="M3 20l9-10"/><path fill="#26679f" d="M10 8l6-6 4 4-6 6z"/></svg>
          <svg width="20" height="22" viewBox="0 0 20 22"><circle cx="8" cy="8" r="6" fill="#e9f2fa" stroke="#8a94a0" stroke-width="1.500"/><path stroke="#8a7a66" stroke-width="3" d="M12.500 13l6 7"/></svg>
        </div>
        <div class="rl">工具</div>
      </div>
      <!-- brush -->
      <div class="rg r4 d-flex flex-column">
        <div class="rbtn rbtn-b">
          <div class="rtop d-flex align-items-center justify-content-center">
            <svg width="32" height="32" viewBox="0 0 32 32"><rect width="32" height="32" fill="#f5f6f7" stroke="#a2aab3"/><path fill="#c86f2c" d="M4 16c0-6 4-10 8-10-2 5-3 10 2 14 4 2 8-1 10-3 0 7-6 11-12 10S4 22 4 16z"/><path stroke="#888" stroke-width="3" d="M28 3L14 20"/><path fill="#8a5524" d="M14 18l3 3-4 3z"/></svg>
          </div>
          <div class="rtxt">刷</div><div class="rtxt">子<svg width="8" height="8"><path fill="#444" d="M1 2h6L4 6z"/></svg></div>
        </div>
      </div>
      <!-- shapes -->
      <div class="rg r5 d-flex flex-column">
        <div class="d-flex">
          <div class="rtxt shape-box">
            <svg class="rtop-ic" width="32" height="31" viewBox="0 0 32 34"><circle cx="21" cy="12" r="10" fill="#4fb04a"/><path fill="#e98c6e" stroke="#b7623f" d="M2 5h18v19H2z"/><path fill="#cde7f7" stroke="#2d6ea5" d="M8 14c0-5 14-5 14 0v16c0 4-14 4-14 0z"/><path fill="none" stroke="#2d6ea5" d="M8 14c0 4 14 4 14 0"/></svg>
            <div>形</div><div>状<svg width="8" height="8"><path fill="#444" d="M1 2h6L4 6z"/></svg></div>
          </div>
          <div class="shape-side d-flex flex-column gap-2 text-secondary">
            <div class="d-flex align-items-center gap-1"><svg width="16" height="18" viewBox="0 0 16 18"><path fill="#f4f5f6" stroke="#9aa5b1" d="M1 4h9v11H1z"/><path stroke="#9aa5b1" stroke-width="2" d="M5 13L14 2"/></svg><span>轮廓</span><svg width="8" height="8"><path fill="#bbb" d="M1 2h6L4 6z"/></svg></div>
            <div class="d-flex align-items-center gap-1"><svg width="16" height="18" viewBox="0 0 16 18"><path fill="#bfd0e0" stroke="#8ea0b2" d="M8 1l7 8-6 7-7-7z"/><path fill="#a8b4c0" d="M0 16h16v2H0z"/></svg><span>填充</span><svg width="8" height="8"><path fill="#bbb" d="M1 2h6L4 6z"/></svg></div>
          </div>
        </div>
        <div class="rl">形状</div>
      </div>
      <!-- size -->
      <div class="rg r6 d-flex flex-column align-items-center">
        <svg class="size-ic" width="32" height="28" viewBox="0 0 32 28"><path fill="#1f3552" d="M0 0h32v1H0zM0 6h32v2H0zM0 13h32v4H0zM0 21h32v7H0z"/></svg>
        <div class="rtxt">粗</div><div class="rtxt">细<svg width="8" height="8"><path fill="#444" d="M1 2h6L4 6z"/></svg></div>
      </div>
      <!-- colours -->
      <div class="rg r7 d-flex flex-column">
        <div class="d-flex">
          <div class="rbtn rbtn-c rtxt">
            <div class="col-blk"></div><div>颜</div><div>色 1</div>
          </div>
          <div class="rtxt col2">
            <div class="col-wht"></div><div>颜</div><div>色 2</div>
          </div>
          <div class="pal d-flex flex-wrap flex-none">
            <span class="sw"><i class="k0"></i></span><span class="sw"><i class="k1"></i></span><span class="sw"><i class="k2"></i></span><span class="sw"><i class="k3"></i></span><span class="sw"><i class="k4"></i></span><span class="sw"><i class="k5"></i></span><span class="sw"><i class="k6"></i></span><span class="sw"><i class="k7"></i></span><span class="sw"><i class="k8"></i></span><span class="sw"><i class="k9"></i></span>
            <span class="sw"><i class="l0"></i></span><span class="sw"><i class="l1"></i></span><span class="sw"><i class="l2"></i></span><span class="sw"><i class="l3"></i></span><span class="sw"><i class="l4"></i></span><span class="sw"><i class="l5"></i></span><span class="sw"><i class="l6"></i></span><span class="sw"><i class="l7"></i></span><span class="sw"><i class="l8"></i></span><span class="sw"><i class="l9"></i></span>
            <span class="sw sw-e"></span><span class="sw sw-e"></span><span class="sw sw-e"></span><span class="sw sw-e"></span><span class="sw sw-e"></span><span class="sw sw-e"></span><span class="sw sw-e"></span><span class="sw sw-e"></span><span class="sw sw-e"></span><span class="sw sw-e"></span>
          </div>
          <div class="rtxt edit-box">
            <div class="rain"></div><div>编辑</div><div>颜色</div>
          </div>
        </div>
        <div class="rl">颜色</div>
      </div>
      <!-- paint3d -->
      <div class="rg r8 d-flex flex-column border-0 overflow-hidden">
        <div class="rtxt p3d">
          <svg class="p3d-ic" width="30" height="30" viewBox="0 0 30 30"><rect x="1" y="1" width="28" height="28" fill="#fff" stroke="#bbb"/><path fill="#c44ab0" d="M15 5c5 0 8 4 8 8 0 5-5 9-8 12-3-3-8-7-8-12 0-4 3-8 8-8z"/><path fill="#3aa3e8" d="M15 5c-5 0-8 4-8 8l8 4z"/></svg>
          <div>使用画图</div><div>D 进行编</div>
        </div>
      </div>
    </div>
    <div class="workspace">
      <svg class="pic" viewBox="871 172 857 604">
        <defs>
          <marker id="tick" viewBox="0 0 4 4" refX="0" refY="2" markerWidth="4" markerHeight="4" markerUnits="userSpaceOnUse" orient="auto-start-reverse"><path d="M0 0h4v4H0z" fill="#111"/></marker>
        </defs>
        <!-- thick -->
        <path class="th" d="M1013.300 324.200H1344.300V590H1547.300V486.700H1463.300V418.300H1655V516M1655 547V679.500H1013.300V324.200"/>
        <path class="th" d="M1057.300 635.800V368.500H1301V635.800H1221V459.800H1150.700V635.800z"/>
        <circle class="th" cx="1419.700" cy="634.300" r="29"/>
        <circle class="th" cx="1595.700" cy="634.300" r="29"/>
        <circle class="th" cx="1595.700" cy="478.300" r="29"/>
        <!-- center lines -->
        <path class="dash" d="M1381 634.300H1728M1545 478.300H1715M1419.700 600V735M1595.700 366V735"/>
        <!-- thin ext -->
        <path class="tn" d="M1012 208V320M1344 208V320M1056 269V366M1300 269V366M903 325H1007M903 681H1007M956 369.700H1050M956 636.600H1050M1098 461.400H1146M1056 684V737M1150 684V737M1220 684V737M1012 684V769M1653.300 682V769M1461.700 324V416M1653.300 324V416M1406 419H1457M1406 486.700H1457M1461.700 490V541M1659 419H1728M1659 680.700H1728"/>
        <path class="tn" d="M1056 638V680M1150 638V680M1220 638V680"/>
        <path class="tn" d="M1581.700 440L1620 540H1692.700"/>
        <path fill="#000" d="M1578 446l4-6 3 8z"/>
        <!-- dims -->
        <line class="tn tnd" x1="1012" y1="212.300" x2="1344" y2="212.300"/>
        <line class="tn tnd" x1="1012" y1="273.200" x2="1056" y2="273.200"/>
        <line class="tn tnd" x1="1056" y1="273.200" x2="1300" y2="273.200"/>
        <line class="tn tnd" x1="908.700" y1="325" x2="908.700" y2="681"/>
        <line class="tn tnd" x1="961.700" y1="369.700" x2="961.700" y2="636.600"/>
        <line class="tn tnd" x1="961.700" y1="636.600" x2="961.700" y2="681"/>
        <line class="tn tnd" x1="1101.700" y1="461.400" x2="1101.700" y2="636"/>
        <line class="tn tnd" x1="1056" y1="730.700" x2="1150" y2="730.700"/>
        <line class="tn tnd" x1="1150" y1="730.700" x2="1220" y2="730.700"/>
        <line class="tn tnd" x1="1012" y1="762.300" x2="1653.300" y2="762.300"/>
        <line class="tn tnd" x1="1461.700" y1="329" x2="1653.300" y2="329"/>
        <line class="tn tnd" x1="1595.700" y1="371.700" x2="1653.300" y2="371.700"/>
        <line class="tn tnd" x1="1419.700" y1="729.300" x2="1595.700" y2="729.300"/>
        <line class="tn tnd" x1="1411" y1="419" x2="1411" y2="486.700"/>
        <line class="tn tnd" x1="1411" y1="486.700" x2="1411" y2="590"/>
        <line class="tn tnd" x1="1461.700" y1="536" x2="1547" y2="536"/>
        <line class="tn tnd" x1="1709" y1="419" x2="1709" y2="478.300"/>
        <line class="tn tnd" x1="1709" y1="478.300" x2="1709" y2="634.300"/>
        <!-- numbers -->
        <text class="bt" x="1177" y="201">175</text>
        <text class="bt" x="1033" y="263">23</text>
        <text class="bt" x="1177" y="263">129</text>
        <text class="bt" x="1103" y="720.500" letter-spacing="2">49</text>
        <text class="bt" x="1184" y="720.500" letter-spacing="2">38</text>
        <text class="bt" x="1332.700" y="752.700" letter-spacing="1">338</text>
        <text class="bt" x="1557.300" y="317.300">101</text>
        <text class="bt" x="1625" y="360">30</text>
        <text class="bt" x="1504" y="525">44</text>
        <text class="bt" x="1507.300" y="718.300">93</text>
        <text class="bt" x="1658" y="530" letter-spacing="1">3-ø30</text>
        <text class="bt" transform="rotate(-90 896.700 503)" x="896.700" y="503">188</text>
        <text class="bt" transform="rotate(-90 951 503)" x="951" y="503">142</text>
        <text class="bt" transform="rotate(-90 950 658.300)" x="950" y="658.300">23</text>
        <text class="bt" transform="rotate(-90 1091 548.400)" x="1091" y="548.400">93</text>
        <text class="bt" transform="rotate(-90 1400 452.700)" x="1400" y="452.700">36</text>
        <text class="bt" transform="rotate(-90 1400 539)" x="1400" y="539">55</text>
        <text class="bt" transform="rotate(-90 1697.300 449.300)" x="1697.300" y="449.300">32</text>
        <text class="bt" transform="rotate(-90 1697.300 557.700)" x="1697.300" y="557.700">83</text>
      </svg>
    </div>
    <div class="pt-status d-flex align-items-center">
      <div class="pc p1 d-flex align-items-center"><svg width="14" height="14" viewBox="0 0 14 14"><path stroke="#555" d="M7 1v12M1 7h12"/><path stroke="#555" d="M5 3l2-2 2 2M5 11l2 2 2-2"/></svg></div>
      <div class="pc p2 d-flex align-items-center"><svg width="14" height="14" viewBox="0 0 14 14"><path fill="none" stroke="#555" stroke-dasharray="2 1" d="M3 3h8v7H3z"/><path stroke="#555" d="M1 1v4M8 13h5"/></svg></div>
      <div class="pc p3 d-flex align-items-center gap-1"><svg width="14" height="14" viewBox="0 0 14 14"><path fill="none" stroke="#555" d="M4 2h9v8H4z"/><path stroke="#555" d="M2 1v12M4 13h9"/></svg>454 × 302像素</div>
      <div class="pc p4 d-flex align-items-center gap-1"><svg width="14" height="14" viewBox="0 0 14 14"><path fill="none" stroke="#555" d="M2 2h10v10H2z"/><path fill="none" stroke="#555" d="M4 2v4h6V2M4 12V8h6v4"/></svg>大小: 45.4KB</div>
      <div class="pc p5"></div>
      <div class="pc p6 d-flex align-items-center">200%</div>
    </div>
  </section>
</div>

<footer class="taskbar d-flex align-items-center">
  <div class="ti t0 d-flex align-items-center"><span>企业微信</span></div>
  <div class="ti t1 d-flex align-items-center gap-1">
    <svg width="24" height="24" viewBox="0 0 24 24"><circle cx="12" cy="11" r="8" fill="none" stroke="#3aa0e8" stroke-width="3"/><path fill="#8dc63f" d="M16 15l4 2-4 5-2-4z"/><path fill="#f7941d" d="M19 17l3 1-2 3z"/></svg>
    <span>空间设计大讲堂发...</span>
  </div>
  <div class="ti t2 d-flex align-items-center gap-1">
    <svg width="24" height="24" viewBox="0 0 24 24"><rect width="24" height="24" fill="#f2f2f2"/><path fill="#c8202a" d="M11 2h5l6 20h-6l-1-4H9l-2 4H2zM14 8l-3 7h4z"/></svg>
    <span>Autodesk AutoCA...</span>
  </div>
  <div class="ti t3 d-flex align-items-center gap-2">
    <svg width="16" height="26" viewBox="0 0 16 26"><path fill="#f7d14c" d="M2 2h9l3 3v19l-5-2H2z"/><path fill="#e0a92b" d="M9 3l5 2v19l-5-2z"/></svg>
    <span>机械平面练习图</span>
  </div>
  <div class="tray d-flex align-items-center">
    <span><svg width="18" height="20" viewBox="0 0 18 20"><path fill="#bcd9ef" d="M1 1h16v13H1z"/><path fill="#889" d="M5 14l-3 5h4l2-5z"/></svg></span>
    <span><svg width="18" height="20" viewBox="0 0 18 20"><rect x="1" y="1" width="16" height="18" rx="2" fill="#16281a"/><circle cx="9" cy="10" r="5" fill="#76b900"/></svg></span>
    <span><svg width="18" height="18" viewBox="0 0 18 18"><rect width="18" height="18" fill="#e8f2f8"/><circle cx="9" cy="9" r="5" fill="none" stroke="#3aa0e8" stroke-width="2"/><path fill="#8dc63f" d="M11 11l5 2-3 4z"/></svg></span>
    <span><svg width="18" height="18" viewBox="0 0 18 18"><circle cx="9" cy="4" r="3.500" fill="#f4b8cb"/><circle cx="4" cy="9" r="3.500" fill="#f4b8cb"/><circle cx="14" cy="9" r="3.500" fill="#f4b8cb"/><circle cx="9" cy="14" r="3.500" fill="#f4b8cb"/><circle cx="9" cy="9" r="2.500" fill="#e86"/></svg></span>
    <span><svg width="12" height="20" viewBox="0 0 12 20"><path fill="#f0f0f0" d="M3 0h6v5H3z"/><path fill="#e8a23a" d="M1 5h10v14H1z"/></svg></span>
    <span><svg width="12" height="18" viewBox="0 0 12 18"><path fill="#d9d9d9" d="M1 7h3l7-6v16l-7-6H1z"/><path fill="#e06a3b" d="M6 5h2v8H6z"/></svg></span>
    <span><svg width="12" height="22" viewBox="0 0 12 22"><path fill="none" stroke="#e6eef6" d="M3 1h6v6H3zM1 7h10v14H1z"/></svg></span>
    <span><svg width="14" height="22" viewBox="0 0 14 22"><path fill="#f2bc3e" d="M7 0l7 3v9c0 5-4 8-7 10-3-2-7-5-7-10V3z"/><path fill="#fff" d="M9 3L4 12h3l-2 7 5-9H7z"/></svg></span>
    <span><svg width="18" height="18" viewBox="0 0 18 18"><g fill="none" stroke="#c9d7e2"><path d="M3 16A14 14 0 0 1 16 2"/><path d="M6 16A10 10 0 0 1 16 6"/><path d="M9 16a7 7 0 0 1 7-7"/></g><circle cx="14" cy="15" r="2" fill="#fff"/></svg></span>
    <span><svg width="16" height="18" viewBox="0 0 16 18"><path fill="none" stroke="#e6eef6" d="M1 7h3l5-5v14l-5-5H1z"/><path fill="none" stroke="#c9d7e2" d="M11 6c2 2 2 4 0 6"/></svg></span>
    <span class="fw-bold">中</span>
    <span><svg width="16" height="22" viewBox="0 0 16 22"><rect width="16" height="22" fill="#2a8ad8"/><text x="8" y="15" font-family="Liberation Sans" font-size="11" fill="#cde" text-anchor="middle">du</text></svg></span>
  </div>
  <div class="clock"><b>17</b><b class="ps-0">2020</b></div>
</footer>

<!-- overlays -->
<div class="zbar d-flex align-items-center">
  <div class="zpill zp1 d-flex align-items-center justify-content-center flex-none">演示屏幕 ▾</div>
  <div class="zdiv zdv1 flex-none"></div>
  <div class="zact flex-none"><svg class="d-block mx-auto" width="22" height="20" viewBox="0 0 22 20"><circle cx="9" cy="6" r="5" fill="#eee"/><path fill="#eee" d="M1 18c0-5 3-7 8-7s8 2 8 7z"/><path stroke="#eee" d="M17 3v6M14 6h6"/></svg>邀请成员</div>
  <div class="zact flex-none"><svg class="d-block mx-auto" width="20" height="20" viewBox="0 0 20 20"><path fill="#eee" d="M2 8h16v11H2z"/><path fill="none" stroke="#1c1c1c" stroke-width="2" d="M10 14V3"/><path fill="none" stroke="#eee" stroke-width="2" d="M10 10V2M6 5l4-4 4 4"/></svg>分享直播</div>
  <div class="zact flex-none"><svg class="d-block mx-auto" width="22" height="20" viewBox="0 0 22 20"><path fill="#bbb" d="M10 2l2 6 6 2-6 2-2 7-2-7-6-2 6-2z"/><path fill="#ddd" d="M17 1l1 3 3 1-3 1-1 3-1-3-3-1 3-1z"/></svg>视频美颜</div>
  <div class="zdiv zdv2 flex-none"></div>
  <div class="zpill zp2 d-flex align-items-center justify-content-center flex-none">暂停</div>
  <div class="zpill zp3 d-flex align-items-center justify-content-center flex-none">结束</div>
</div>
<div class="handle"></div>
<div class="timer d-flex align-items-center justify-content-center">00:08</div>
<div class="ime d-flex align-items-center">中 °,</div>
<div class="dubtn d-flex align-items-center justify-content-center">du</div>

<script src="https://cdn.jsdelivr.net/npm/bootstrap@5.3.0/dist/js/bootstrap.bundle.min.js"></script>
</body>
</html>
